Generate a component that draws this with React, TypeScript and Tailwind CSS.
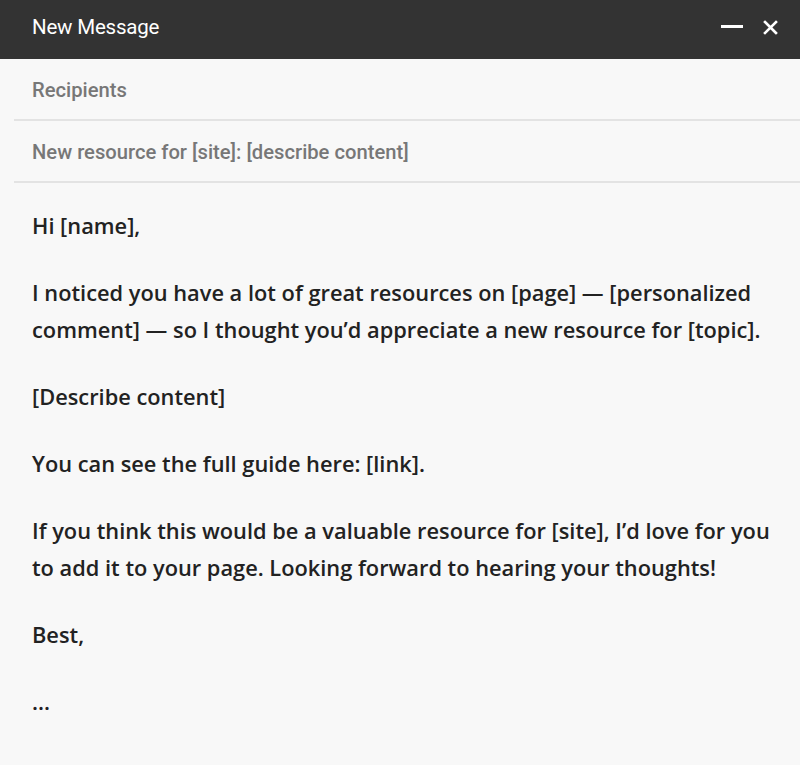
import React from 'react';

const paragraphs: string[] = [
  'Hi [name],',
  'I noticed you have a lot of great resources on [page] — [personalized comment] — so I thought you’d appreciate a new resource for [topic].',
  '[Describe content]',
  'You can see the full guide here: [link].',
  'If you think this would be a valuable resource for [site], I’d love for you to add it to your page. Looking forward to hearing your thoughts!',
  'Best,',
  '...',
];

export default function App() {
  return (
    <div className="w-[800px] h-[765px] bg-[#f8f8f8] flex flex-col overflow-hidden">
      {/* header */}
      <div className="h-[59px] bg-[#333333] flex items-center justify-between pl-8 pr-[22px] pb-[5px] shrink-0">
        <span className="text-white text-[20.5px] font-['Roboto',sans-serif] tracking-[-0.2px]">New Message</span>
        <div className="flex items-center gap-[20px]">
          <svg width="22" height="4" viewBox="0 0 22 4">
            <rect x="0" y="0" width="22" height="3" fill="#ffffff" />
          </svg>
          <svg width="15" height="15" viewBox="0 0 15 15">
            <path d="M2 2 L13 13 M13 2 L2 13" stroke="#ffffff" strokeWidth="2.6" strokeLinecap="square" />
          </svg>
        </div>
      </div>

      {/* fields */}
      <div className="pl-[14px]">
        <div className="h-[62px] flex items-center pl-[18px] pt-[2px] border-b-2 border-[#e3e3e3] text-[20.2px] text-[#777777] font-medium font-['Roboto',sans-serif]">
          Recipients
        </div>
        <div className="h-[62px] flex items-center pl-[18px] pt-[2px] border-b-2 border-[#e3e3e3] text-[20.2px] text-[#777777] font-medium font-['Roboto',sans-serif]">
          New resource for [site]: [describe content]
        </div>
      </div>

      {/* body */}
      <div className="pl-8 pr-6 pt-[24px] flex flex-col gap-[30px] text-[21.8px] leading-[37px] font-semibold text-[#222222] font-['Open_Sans',sans-serif]">
        {paragraphs.map((p, i) => (
          <p key={i}>{p}</p>
        ))}
      </div>
    </div>
  );
}
